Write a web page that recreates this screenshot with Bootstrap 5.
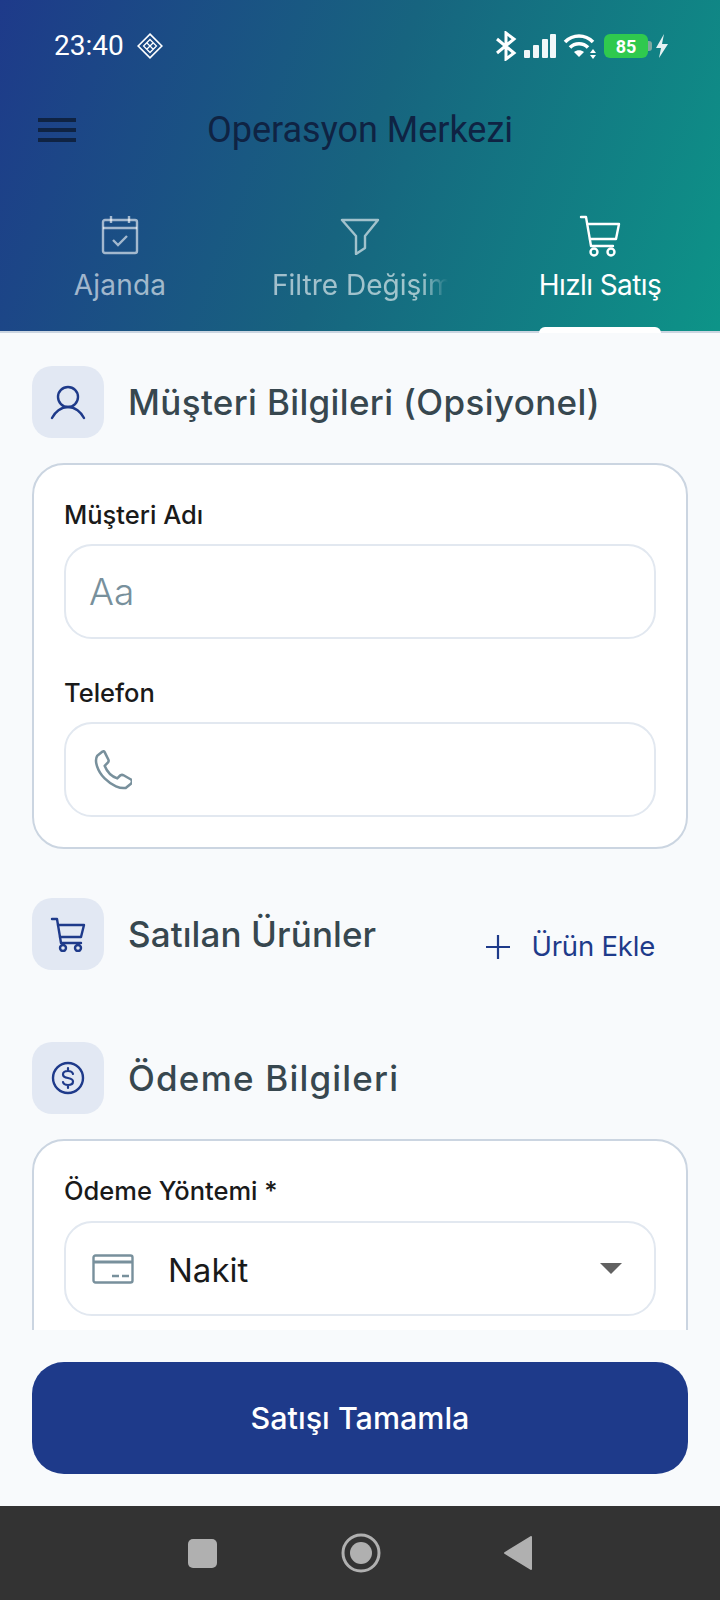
<!DOCTYPE html>
<html lang="tr">
<head>
  <meta charset="UTF-8" />
  <meta name="viewport" content="width=device-width, initial-scale=1.0" />
  <title>Operasyon Merkezi</title>
  <link href="https://cdn.jsdelivr.net/npm/bootstrap@5.3.3/dist/css/bootstrap.min.css" rel="stylesheet" />
  <style>
    body { width: 720px; height: 1600px; overflow: hidden; background: #f8fafc; font-family: Inter, "Noto Sans", sans-serif; }
    .app-head { height: 333px; background: linear-gradient(110deg, #1e3a8a 0%, #17647f 50%, #0d9488 100%); border-bottom: 2px solid #cbd5e1; }
    .status-row { height: 92px; padding: 0 51px 0 54px; color: #fff; }
    .status-time { font-family: Roboto, sans-serif; font-size: 28px; font-weight: 400; }
    .batt { position: relative; width: 44px; height: 24px; background: #2fc94e; border-radius: 6px; color: #fff; font: 700 18px Roboto, sans-serif; }
    .batt::after { content: ""; position: absolute; right: -4px; top: 7px; width: 4px; height: 10px; background: #7fa8a0; border-radius: 0 3px 3px 0; }
    .title-row { height: 76px; padding-left: 38px; }
    .app-title { font-family: Roboto, sans-serif; font-size: 36px; color: #0f2343; width: 568px; text-align: center; }
    .tab-row { padding-top: 47px; }
    .tab-item { width: 240px; height: 116px; color: rgba(255,255,255,.6); }
    .tab-item.on { color: #fff; }
    .tab-label { font-size: 28px; line-height: 36px; margin-top: 12px; letter-spacing: .2px; }
    .tab-item.on .tab-label { letter-spacing: -.6px; }
    .tab-fade { width: 176px; overflow: hidden; white-space: nowrap; letter-spacing: 0; -webkit-mask-image: linear-gradient(90deg, #000 85%, transparent); mask-image: linear-gradient(90deg, #000 85%, transparent); }
    .tab-line { width: 122px; height: 6px; background: #fff; border-radius: 6px 6px 0 0; margin-top: 24px; flex: none; }
    .main-area { height: 997px; overflow: hidden; padding: 33px 32px 0; }
    .sec-icon { width: 72px; height: 72px; border-radius: 20px; background: #e2e8f3; color: #1e3a8a; flex: none; }
    .sec-title { font-size: 35px; font-weight: 500; color: #37474f; margin-left: 24px; letter-spacing: .35px; }
    .sec-title.wide-title { letter-spacing: 1.200px; }
    .sec-title.tight-title { letter-spacing: .1px; }
    .sec-row { height: 72px; }
    .form-box { border: 2px solid #cbd5e1; border-radius: 32px; background: #fff; padding: 32px 30px 30px; }
    .form-box.cut-off { padding-bottom: 80px; }
    .field-label { font-size: 25.500px; font-weight: 500; color: #1a1a1a; line-height: 36px; margin-bottom: 11px; }
    .field-box { height: 95px; border: 2px solid #e2e8f0; border-radius: 28px; padding: 0 26px; color: #78909c; }
    .field-gap { margin-top: 36px; }
    .aa-text { font-size: 37px; font-weight: 300; margin-left: -3px; }
    .val-text { font-size: 33px; color: #1a1a1a; margin-left: 34px; padding-top: 4px; }
    .caret-down { width: 0; height: 0; border-left: 11px solid transparent; border-right: 11px solid transparent; border-top: 11px solid #616161; margin-left: auto; margin-right: 6px; }
    .add-link { font-size: 27.500px; color: #1e3a8a; margin-top: 26px; margin-right: 33px; letter-spacing: -.2px; }
    .foot-area { height: 176px; padding: 32px; background: #f8fafc; }
    .done-btn { height: 112px; border-radius: 32px; background: #1e3a8a; border: 0; color: #fff; font-size: 30.500px; font-weight: 500; }
    .sys-nav { height: 94px; background: #333; padding: 0 188px; }
  </style>
</head>
<body class="d-flex flex-column">

  <!-- Header -->
  <header class="app-head flex-shrink-0">
    <div class="status-row d-flex align-items-center justify-content-between">
      <div class="d-flex align-items-center gap-2">
        <span class="status-time">23:40</span>
        <svg width="28" height="28" viewBox="0 0 26 26" fill="none" stroke="#fff" stroke-width="1.500" class="ms-1"><path d="M13 2l11 11-11 11L2 13z"/><path d="M13 7l6 6-6 6-6-6zM10 10l6 6M16 10l-6 6" stroke-width="1.200"/></svg>
      </div>
      <div class="d-flex align-items-center" style="gap:7px">
        <svg width="22" height="30" viewBox="0 0 22 30" fill="none" stroke="#fff" stroke-width="3"><path d="M2 8l17 14-8 6V2l8 6L2 22"/></svg>
        <svg width="32" height="24" viewBox="0 0 32 24" fill="#f1f7f9"><rect x="0" y="16" width="6" height="8" rx="1"/><rect x="9" y="11" width="6" height="13" rx="1"/><rect x="18" y="5" width="6" height="19" rx="1"/><rect x="26" y="0" width="6" height="24" rx="1"/></svg>
        <svg width="34" height="26" viewBox="0 0 34 26" fill="none" stroke="#fff" stroke-width="3.600"><path d="M2 9c8-8 20-8 28 0M7 14.500c5-5 13-5 18 0"/><path d="M16 24l-5-5c3-2.500 7-2.500 10 0z" fill="#fff" stroke="none"/><path d="M30 16l3 4h-6zM30 26l3-4h-6z" fill="#fff" stroke="none"/></svg>
        <span class="batt d-inline-flex align-items-center justify-content-center">85</span>
        <svg width="14" height="24" viewBox="0 0 14 24" fill="#e6f2f3"><path d="M9 0L1 14h5l-2 10 9-14H7z"/></svg>
      </div>
    </div>

    <div class="title-row d-flex align-items-center">
      <svg width="38" height="26" viewBox="0 0 38 26" fill="#0f2343" class="flex-shrink-0"><rect width="38" height="4" y="1"/><rect width="38" height="4" y="11"/><rect width="38" height="4" y="21"/></svg>
      <div class="app-title">Operasyon Merkezi</div>
    </div>

    <div class="tab-row d-flex">
      <div class="tab-item d-flex flex-column align-items-center">
        <svg width="40" height="40" viewBox="0 0 40 40" fill="none" stroke="currentColor" stroke-width="2.400" class="flex-shrink-0"><rect x="3" y="5" width="34" height="33" rx="2"/><path d="M3 13h34M11 1v7M29 1v7"/><path d="M13 25l5 5 9-9"/></svg>
        <div class="tab-label">Ajanda</div>
      </div>
      <div class="tab-item d-flex flex-column align-items-center">
        <svg width="40" height="40" viewBox="0 0 40 40" fill="none" stroke="currentColor" stroke-width="2.400" class="flex-shrink-0"><path d="M2 5h36L25 21v12l-9 6V21z" stroke-linejoin="round"/></svg>
        <div class="tab-label tab-fade">Filtre Değişim</div>
      </div>
      <div class="tab-item on d-flex flex-column align-items-center">
        <svg width="42" height="42" viewBox="0 0 42 42" fill="none" stroke="currentColor" stroke-width="2.400" stroke-linecap="round" stroke-linejoin="round" class="flex-shrink-0" style="margin-bottom:-2px"><path d="M2 2h5l5 29h22"/><path d="M8.500 9H40l-3 15H11"/><circle cx="15" cy="37" r="3.500"/><circle cx="32" cy="37" r="3.500"/></svg>
        <div class="tab-label">Hızlı Satış</div>
        <div class="tab-line"></div>
      </div>
    </div>
  </header>

  <!-- Content -->
  <main class="main-area flex-shrink-0">
    <div class="sec-row d-flex align-items-center">
      <div class="sec-icon d-flex align-items-center justify-content-center">
        <svg width="36" height="36" viewBox="0 0 36 36" fill="none" stroke="currentColor" stroke-width="2.400" stroke-linecap="round"><circle cx="18" cy="13" r="10"/><path d="M2 34c3-6 9-11 16-11s13 5 16 11"/></svg>
      </div>
      <div class="sec-title">Müşteri Bilgileri (Opsiyonel)</div>
    </div>

    <div class="form-box" style="margin-top:25px">
      <div class="field-label">Müşteri Adı</div>
      <div class="field-box d-flex align-items-center"><span class="aa-text">Aa</span></div>
      <div class="field-label field-gap">Telefon</div>
      <div class="field-box d-flex align-items-center">
        <svg width="40" height="40" viewBox="-2 0 38 38" fill="none" stroke="currentColor" stroke-width="2.400" stroke-linejoin="round"><path d="M8 1.500l-5 4C0 10 3 20 10 27s15 10 20 9l5-4c1-1 1-3 0-4l-7-4c-1-.500-2-.500-3 0l-3 3c-6-2-10-7-12-12l3-3c1-1 1-2 .500-3L10 2c-.500-1-1-1-2-.500z"/></svg>
      </div>
    </div>

    <div class="sec-row d-flex align-items-center justify-content-between" style="margin-top:49px">
      <div class="d-flex align-items-center">
        <div class="sec-icon d-flex align-items-center justify-content-center">
          <svg width="36" height="36" viewBox="0 0 36 36" fill="none" stroke="currentColor" stroke-width="2.400" stroke-linecap="round" stroke-linejoin="round"><path d="M2 3h5l4 24h20"/><path d="M8 9h26l-3 12H10"/><circle cx="13" cy="32" r="3"/><circle cx="28" cy="32" r="3"/></svg>
        </div>
        <div class="sec-title tight-title">Satılan Ürünler</div>
      </div>
      <div class="add-link d-flex align-items-center">
        <svg width="26" height="26" viewBox="0 0 26 26" fill="none" stroke="currentColor" stroke-width="2.200" style="margin-right:20px"><path d="M13 1v24M1 13h24"/></svg>
        Ürün Ekle
      </div>
    </div>

    <div class="sec-row d-flex align-items-center" style="margin-top:72px">
      <div class="sec-icon d-flex align-items-center justify-content-center">
        <svg width="36" height="36" viewBox="0 0 36 36" fill="none" stroke="currentColor" stroke-width="2.400" stroke-linecap="round"><circle cx="18" cy="18" r="15"/><path d="M23 14c-.500-2-2.500-3-5-3-3 0-5 1.500-5 3.500s2 3 5 3.500 5 1.500 5 3.500-2 3.500-5 3.500c-2.500 0-4.500-1-5-3M18 8v3M18 25v3" stroke-width="2.200"/></svg>
      </div>
      <div class="sec-title wide-title">Ödeme Bilgileri</div>
    </div>

    <div class="form-box cut-off" style="margin-top:25px">
      <div class="field-label" style="margin-bottom:12px">Ödeme Yöntemi *</div>
      <div class="field-box d-flex align-items-center">
        <svg width="42" height="30" viewBox="0 0 42 30" fill="none" stroke="currentColor" stroke-width="2.400"><rect x="1.500" y="1.500" width="39" height="27" rx="2"/><path d="M1.500 8h39" stroke-width="3"/><path d="M20 22h7M30 22h7"/></svg>
        <span class="val-text">Nakit</span>
        <span class="caret-down"></span>
      </div>
    </div>
  </main>

  <!-- Action -->
  <div class="foot-area flex-shrink-0">
    <button type="button" class="btn done-btn w-100">Satışı Tamamla</button>
  </div>

  <!-- Android nav -->
  <nav class="sys-nav d-flex align-items-center justify-content-between flex-shrink-0">
    <svg width="29" height="29" viewBox="0 0 29 29" fill="#b0b0b0"><rect width="29" height="29" rx="5"/></svg>
    <svg width="40" height="40" viewBox="0 0 40 40" fill="#b0b0b0"><circle cx="20" cy="20" r="18" fill="none" stroke="#b0b0b0" stroke-width="3"/><circle cx="20" cy="20" r="11"/></svg>
    <svg width="28" height="34" viewBox="0 0 28 34" fill="#b0b0b0" stroke="#b0b0b0" stroke-width="2" stroke-linejoin="round"><path d="M27 1v32L1 17z"/></svg>
  </nav>

  <script src="https://cdn.jsdelivr.net/npm/bootstrap@5.3.3/dist/js/bootstrap.bundle.min.js"></script>
</body>
</html>
